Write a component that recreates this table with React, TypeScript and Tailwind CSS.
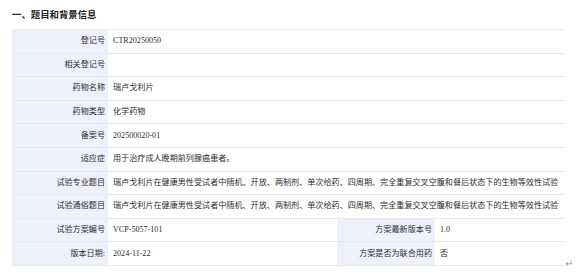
const font = { fontFamily: '"Liberation Serif", "Noto Sans CJK SC", serif' };

const rows: [string, string][] = [
  ["登记号", "CTR20250050"],
  ["相关登记号", ""],
  ["药物名称", "瑞卢戈利片"],
  ["药物类型", "化学药物"],
  ["备案号", "202500020-01"],
  ["适应症", "用于治疗成人晚期前列腺癌患者。"],
  [
    "试验专业题目",
    "瑞卢戈利片在健康男性受试者中随机、开放、两制剂、单次给药、四周期、完全重复交叉空腹和餐后状态下的生物等效性试验",
  ],
  [
    "试验通俗题目",
    "瑞卢戈利片在健康男性受试者中随机、开放、两制剂、单次给药、四周期、完全重复交叉空腹和餐后状态下的生物等效性试验",
  ],
];

const split: [string, string, string, string][] = [
  ["试验方案编号", "VCP-5057-101", "方案最新版本号", "1.0"],
  ["版本日期:", "2024-11-22", "方案是否为联合用药", "否"],
];

export default function App() {
  return (
    <div className="w-[583px] h-[275px] bg-white text-[#2e2e2e] relative overflow-hidden" style={font}>
      <div className="pl-[12px] pt-[9px] h-[29px] text-[9.4px] leading-[12px] font-bold text-[#222]">
        一、题目和背景信息
      </div>
      <div className="ml-[12px] w-[553px] border-t border-[#ececec] text-[8.1px]">
        {rows.map(([label, value]) => (
          <div key={label} className="flex h-[23.6px] border-b border-[#e8e8e8]">
            <div className="w-[96px] shrink-0 bg-[#eef1fa] flex items-center justify-end pr-[3px]">
              {label}
            </div>
            <div className="flex-1 flex items-center pl-[5px] whitespace-nowrap overflow-hidden">
              {value}
            </div>
          </div>
        ))}
        {split.map(([l1, v1, l2, v2]) => (
          <div key={l1} className="flex h-[23.6px] border-b border-[#e8e8e8]">
            <div className="w-[96px] shrink-0 bg-[#eef1fa] flex items-center justify-end pr-[3px]">
              {l1}
            </div>
            <div className="w-[229px] shrink-0 flex items-center pl-[5px]">{v1}</div>
            <div className="w-[98px] shrink-0 bg-[#eef1fa] flex items-center justify-end pr-[3px]">
              {l2}
            </div>
            <div className="flex-1 flex items-center pl-[5px]">{v2}</div>
          </div>
        ))}
      </div>
      <span className="absolute left-[565px] top-[256px] text-[10px] text-[#999]">↵</span>
    </div>
  );
}
